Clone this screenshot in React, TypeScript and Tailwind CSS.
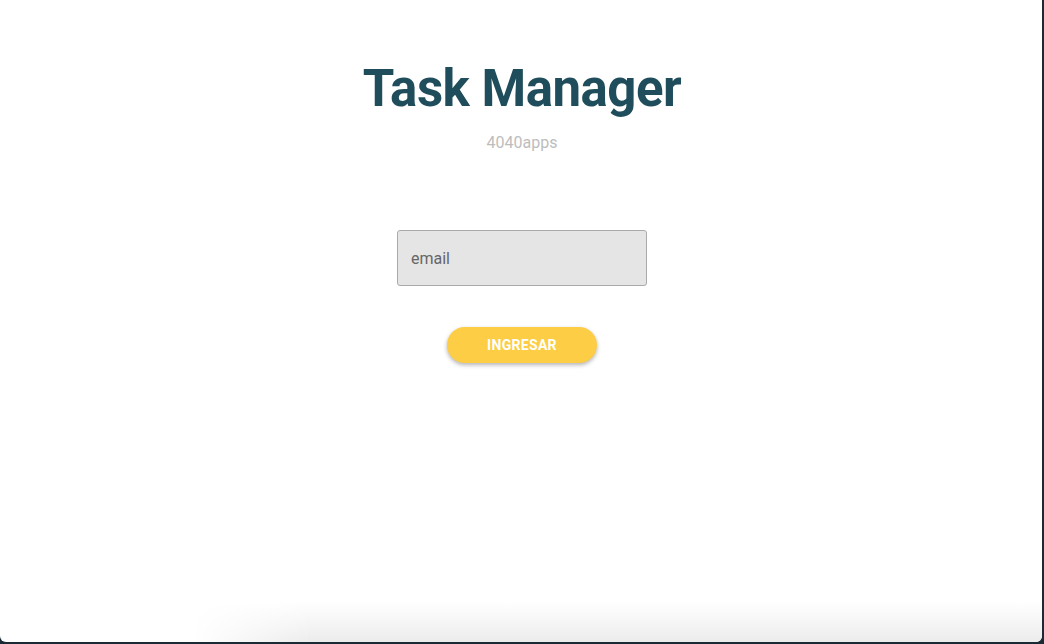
import React from "react";

export default function App() {
  return (
    <div className="w-[1044px] h-[644px] bg-[#1c2b33] overflow-hidden">
      <div className="w-[1042px] h-[642px] bg-white rounded-b-[6px] flex flex-col items-center pl-[2px] font-['Roboto',sans-serif] overflow-hidden">
        <h1 className="mt-[57px] text-[51px] leading-[64px] font-bold text-[#1f4d5b] tracking-[-0.5px]">
          Task Manager
        </h1>
        <p className="mt-[12px] text-[16px] leading-[20px] text-[#bdbdbd]">4040apps</p>

        <input
          type="text"
          placeholder="email"
          className="mt-[77px] w-[250px] h-[56px] bg-[#e5e5e5] border border-[#aaaaaa] rounded-[3px] px-[13px] text-[16px] text-[#555] placeholder:text-[#666] outline-none"
        />

        <button className="mt-[41px] w-[150px] h-[36px] rounded-full bg-[#fdcd45] text-white text-[14px] font-bold tracking-[0.3px] shadow-[0_2px_4px_rgba(0,0,0,0.3)]">
          INGRESAR
        </button>

        <div className="mt-auto w-full h-[40px] flex">
          <div className="w-[190px]" />
          <div className="flex-1 bg-gradient-to-b from-white to-[#ececec] [mask-image:linear-gradient(to_right,transparent,black_120px)]" />
        </div>
      </div>
    </div>
  );
}
